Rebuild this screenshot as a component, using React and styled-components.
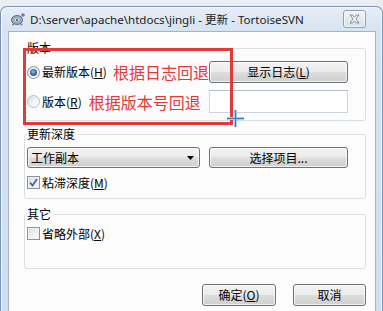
import React from 'react';
import styled, { createGlobalStyle } from 'styled-components';

const GlobalStyle = createGlobalStyle`
  html, body { margin: 0; padding: 0; }
  body {
    width: 383px;
    height: 311px;
    overflow: hidden;
    background: #e9eef4;
    font-family: "Noto Sans CJK SC", "Noto Sans", sans-serif;
  }
`;

const Window = styled.div`
  margin-top: 6px;
  height: 305px;
  box-sizing: border-box;
  display: flex;
  flex-direction: column;
  padding: 0 6px 0 7px;
  border: 1px solid #7b93b0;
  border-bottom: none;
  border-radius: 7px 7px 0 0;
  background: linear-gradient(180deg, #e6eef7 0px, #d6e3f1 24px, #cfdef0 100%);
  box-shadow: inset 1px 1px 0 #f4f8fc, inset -1px 0 0 #f4f8fc;
`;

const TitleBar = styled.div`
  height: 24px;
  display: flex;
  align-items: center;
  padding-left: 2px;
`;

const TitleText = styled.span`
  margin-left: 4px;
  font-family: "Noto Sans", "Noto Sans CJK SC", sans-serif;
  font-size: 11.6px;
  color: #1b1b1b;
  white-space: nowrap;
`;

const CloseButton = styled.div`
  margin-left: auto;
  margin-right: 10px;
  width: 23px;
  height: 18px;
  box-sizing: border-box;
  display: flex;
  align-items: center;
  justify-content: center;
  border: 1px solid #8f9fb3;
  border-radius: 3px;
  background: linear-gradient(180deg, #f3f6fa 0%, #e3eaf2 50%, #d6e0eb 100%);
  box-shadow: inset 0 0 0 1px rgba(255, 255, 255, 0.7);
`;

const Client = styled.div`
  flex: 1;
  position: relative;
  display: flex;
  flex-direction: column;
  padding: 9px 9px 0 15px;
  border: 1px solid #a3b4c6;
  border-bottom: none;
  background: #fcfcfc;
`;

const Group = styled.fieldset`
  margin: ${(p) => p.$top || 0}px 0 0;
  padding: 6px 2px ${(p) => p.$bottom}px;
  min-width: 0;
  border: 1px solid #d5dfe5;
  border-radius: 3px;
  box-shadow: inset 1px 1px 0 #fff;
`;

const Legend = styled.legend`
  padding: 0 2px 0 0;
  font-size: 12px;
  line-height: 14px;
  color: #000;
`;

const Grid = styled.div`
  display: grid;
  grid-template-columns: 182px 139px;
  grid-auto-rows: ${(p) => p.$rows};
  row-gap: ${(p) => p.$gap}px;
  align-items: center;
`;

const Row = styled.div`
  display: flex;
  align-items: center;
  white-space: nowrap;
  min-width: 0;
`;

const Option = styled.label`
  display: flex;
  align-items: center;
  gap: 2px;
  font-size: 12px;
  line-height: 14px;
  color: #000;
  white-space: nowrap;
`;

const Radio = styled.span`
  position: relative;
  flex: none;
  width: 13px;
  height: 13px;
  box-sizing: border-box;
  border-radius: 50%;
  border: 1px solid ${(p) => (p.$checked ? '#8b8f94' : '#b4bcc5')};
  background: linear-gradient(135deg, #d8dde3 0%, #f4f6f8 60%, #ffffff 100%);
  &::after {
    content: '';
    display: ${(p) => (p.$checked ? 'block' : 'none')};
    position: absolute;
    left: 2px;
    top: 2px;
    width: 7px;
    height: 7px;
    border-radius: 50%;
    background: radial-gradient(circle at 45% 40%, #9cc6ea 0%, #3d6fa3 45%, #1d3f66 100%);
  }
`;

const Box = styled.span`
  flex: none;
  width: 13px;
  height: 13px;
  box-sizing: border-box;
  display: flex;
  align-items: center;
  justify-content: center;
  border: 1px solid #8f9398;
  background: linear-gradient(135deg, #d9dcdf 0%, #eef0f2 55%, #fbfbfb 100%);
  box-shadow: inset 0 0 0 1px #f3f3f3;
`;

const Note = styled.span`
  margin-left: ${(p) => p.$gap}px;
  font-size: 16px;
  line-height: 20px;
  color: #e2393b;
`;

const Button = styled.button`
  width: ${(p) => p.$w || 139}px;
  height: ${(p) => p.$h || 22}px;
  padding: 0;
  border: 1px solid #707070;
  border-radius: 3px;
  background: linear-gradient(180deg, #f3f3f3 0%, #ebebeb 48%, #dddddd 52%, #cfcfcf 100%);
  box-shadow: inset 0 0 0 1px rgba(255, 255, 255, 0.75);
  font-family: "Noto Sans CJK SC", "Noto Sans", sans-serif;
  font-size: 12px;
  line-height: 14px;
  color: #000;
`;

const TextBox = styled.div`
  width: 139px;
  height: 23px;
  box-sizing: border-box;
  border: 1px solid #c9d4df;
  border-top-color: #b1bfcd;
  background: #fff;
`;

const Combo = styled.div`
  width: 173px;
  height: 21px;
  box-sizing: border-box;
  display: flex;
  align-items: center;
  justify-content: space-between;
  padding: 0 5px 0 3px;
  border: 1px solid #707070;
  border-radius: 3px;
  background: linear-gradient(180deg, #f3f3f3 0%, #ebebeb 48%, #dddddd 52%, #cfcfcf 100%);
  box-shadow: inset 0 0 0 1px rgba(255, 255, 255, 0.75);
  font-size: 12px;
  line-height: 14px;
  color: #000;
`;

const Footer = styled.div`
  display: flex;
  justify-content: flex-end;
  gap: 17px;
  margin-top: 15px;
`;

const Highlight = styled.div`
  position: absolute;
  left: 14px;
  top: 16px;
  width: 210px;
  height: 77px;
  box-sizing: border-box;
  border: 3px solid #e2393b;
  pointer-events: none;
`;

const Cursor = styled.svg`
  position: absolute;
  left: 217px;
  top: 77px;
`;

const AppIcon = () => (
  <svg width="16" height="16" viewBox="0 0 16 16">
    <ellipse cx="7" cy="9" rx="5.5" ry="4.5" fill="#9aa9bd" stroke="#5d6e86" strokeWidth="1" />
    <path d="M4 9 Q7 5 10 9 Q7 12 4 9 Z" fill="#d7dfe9" />
    <circle cx="7" cy="9" r="1.2" fill="#5d6e86" />
    <circle cx="13" cy="4" r="1.8" fill="#6b7c95" />
    <circle cx="3" cy="13.5" r="1" fill="#6b7c95" />
    <circle cx="11.5" cy="13.5" r="1" fill="#6b7c95" />
  </svg>
);

const CloseGlyph = () => (
  <svg width="11" height="10" viewBox="0 0 11 10">
    <path
      d="M1 1 H3.5 L5.5 3.2 L7.5 1 H10 L6.8 5 L10 9 H7.5 L5.5 6.8 L3.5 9 H1 L4.2 5 Z"
      fill="#ffffff"
      stroke="#6f7d8f"
      strokeWidth="0.9"
      strokeLinejoin="round"
    />
  </svg>
);

const Check = () => (
  <svg width="9" height="9" viewBox="0 0 9 9">
    <path d="M1 4.5 L3.5 7.5 L8 1" fill="none" stroke="#4c61a0" strokeWidth="1.8" />
  </svg>
);

const Arrow = () => (
  <svg width="7" height="4" viewBox="0 0 7 4">
    <path d="M0 0 H7 L3.5 4 Z" fill="#000" />
  </svg>
);

const Label = ({ text, accel }) => (
  <span>
    {text}
    {accel && (
      <>
        (<u>{accel}</u>)
      </>
    )}
  </span>
);

export default function App() {
  return (
    <>
      <GlobalStyle />
      <Window>
        <TitleBar>
          <AppIcon />
          <TitleText>D:\server\apache\htdocs\jingli - 更新 - TortoiseSVN</TitleText>
          <CloseButton>
            <CloseGlyph />
          </CloseButton>
        </TitleBar>
        <Client>
          <Group $bottom={7}>
            <Legend>版本</Legend>
            <Grid $rows="22px 23px" $gap={7}>
              <Row>
                <Option>
                  <Radio $checked />
                  <Label text="最新版本" accel="H" />
                </Option>
                <Note $gap={6}>根据日志回退</Note>
              </Row>
              <Button>
                <Label text="显示日志" accel="L" />
              </Button>
              <Row>
                <Option>
                  <Radio />
                  <Label text="版本" accel="R" />
                </Option>
                <Note $gap={7}>根据版本号回退</Note>
              </Row>
              <TextBox />
            </Grid>
          </Group>

          <Group $top={6} $bottom={9}>
            <Legend>更新深度</Legend>
            <Grid $rows="21px 13px" $gap={8}>
              <Combo>
                <span>工作副本</span>
                <Arrow />
              </Combo>
              <Button $h={21}>选择项目...</Button>
              <Option>
                <Box>
                  <Check />
                </Box>
                <Label text="粘滞深度" accel="M" />
              </Option>
            </Grid>
          </Group>

          <Group $top={8} $bottom={28}>
            <Legend>其它</Legend>
            <Grid $rows="13px" $gap={0}>
              <Option>
                <Box />
                <Label text="省略外部" accel="X" />
              </Option>
            </Grid>
          </Group>

          <Footer>
            <Button $w={74}>
              <Label text="确定" accel="O" />
            </Button>
            <Button $w={73}>取消</Button>
          </Footer>

          <Highlight />
          <Cursor width="19" height="19" viewBox="0 0 19 19">
            <path d="M9.5 1 V18 M1 9.5 H18" stroke="#9fd0ee" strokeWidth="3" />
            <path d="M9.5 1 V18 M1 9.5 H18" stroke="#2c7fc4" strokeWidth="1" />
          </Cursor>
        </Client>
      </Window>
    </>
  );
}
